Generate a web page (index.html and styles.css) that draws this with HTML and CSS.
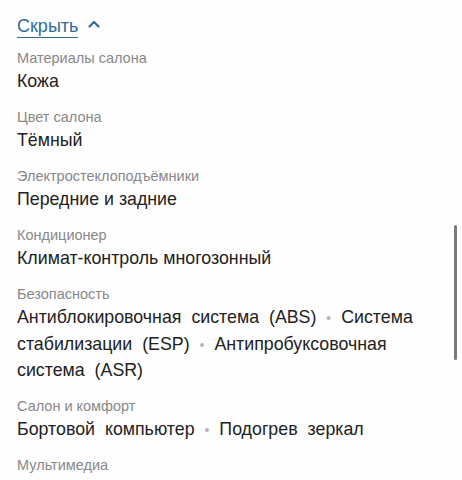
FILE: index.html
```html
<!DOCTYPE html>
<html lang="ru">
<head>
<meta charset="utf-8">
<title>Комплектация</title>
<link rel="stylesheet" href="styles.css">
</head>
<body>
<div class="specs">
  <a class="toggle" href="#">
    <span class="toggle-text">Скрыть</span>
    <svg class="chevron" width="12" height="8" viewBox="0 0 12 8"><path d="M1.5 6.5 L6 2 L10.5 6.5" fill="none" stroke="#2f6b9c" stroke-width="2.2" stroke-linecap="round" stroke-linejoin="round"/></svg>
  </a>
  <dl class="list">
    <div class="item">
      <dt class="label">Материалы салона</dt>
      <dd class="value">Кожа</dd>
    </div>
    <div class="item">
      <dt class="label">Цвет салона</dt>
      <dd class="value">Тёмный</dd>
    </div>
    <div class="item">
      <dt class="label">Электростеклоподъёмники</dt>
      <dd class="value">Передние и задние</dd>
    </div>
    <div class="item">
      <dt class="label">Кондиционер</dt>
      <dd class="value">Климат-контроль многозонный</dd>
    </div>
    <div class="item">
      <dt class="label">Безопасность</dt>
      <dd class="value wide">Антиблокировочная система (ABS) <span class="dot">•</span> Система стабилизации (ESP) <span class="dot">•</span> Антипробуксовочная система (ASR)</dd>
    </div>
    <div class="item">
      <dt class="label">Салон и комфорт</dt>
      <dd class="value wide">Бортовой компьютер <span class="dot">•</span> Подогрев зеркал</dd>
    </div>
    <div class="item">
      <dt class="label">Мультимедиа</dt>
    </div>
  </dl>
</div>
<div class="scrollbar"></div>
</body>
</html>
```
FILE: styles.css
```css
html, body {
  margin: 0;
  padding: 0;
  background: #fefefe;
}

body {
  font-family: "Liberation Sans", Arial, sans-serif;
  color: #222;
  height: 480px;
  overflow: hidden;
}

.specs {
  padding: 12px 17px 0 17px;
}

.toggle {
  display: inline-flex;
  align-items: center;
  gap: 10px;
  text-decoration: none;
  height: 26px;
  margin-top: 1px;
}

.toggle-text {
  font-size: 18px;
  color: #2f6b9c;
  border-bottom: 1.5px solid #2f6b9c;
  line-height: 22px;
}

.chevron {
  margin-top: -4px;
}

.list {
  margin: 0;
  padding-top: 9px;
}

.item {
  margin-bottom: 12.5px;
}

.label {
  font-size: 14.5px;
  line-height: 20px;
  color: #888;
}

.value {
  margin: 0;
  font-size: 17.8px;
  line-height: 26.5px;
  color: #222;
}

.wide {
  word-spacing: 5px;
}

.dot {
  color: #b8b8b8;
  font-size: 14px;
  line-height: 1;
}

.scrollbar {
  position: fixed;
  right: 5px;
  top: 225px;
  width: 3px;
  height: 135px;
  border-radius: 2px;
  background: #7a7a7a;
}
```
